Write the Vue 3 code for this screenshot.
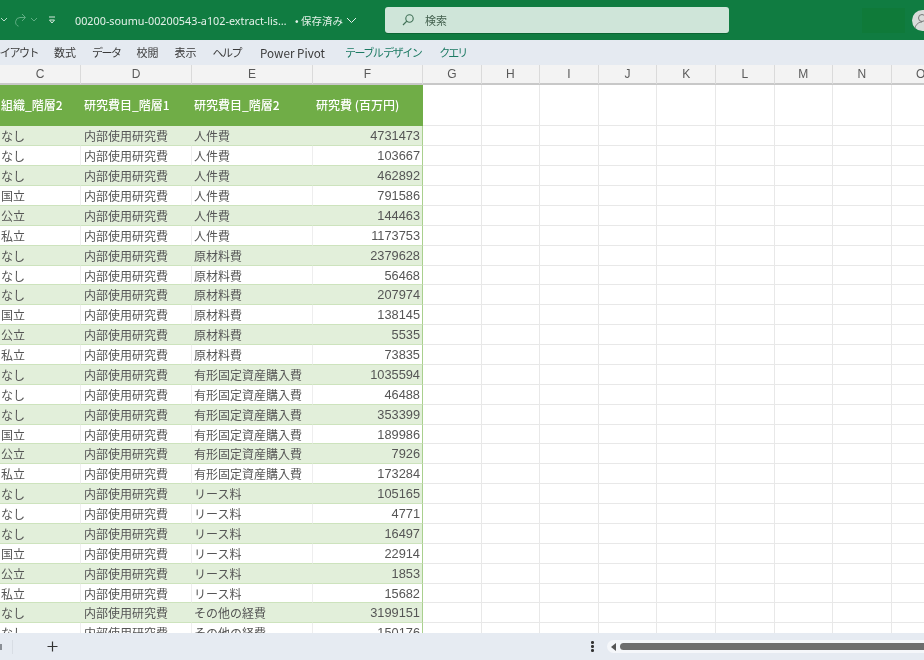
<template>
  <div class="app">
    <header class="titlebar">
      <svg class="ic-chev first" width="8" height="6" viewBox="0 0 8 6"><path d="M1 1l3 3 3-3" fill="none" stroke="#b9dcc8" stroke-width="1" /></svg>
      <svg class="ic-redo" width="13" height="14" viewBox="0 0 13 14">
        <path d="M8 1l3.500 3.500L8 8" fill="none" stroke="#5fae83" stroke-width="1" />
        <path d="M11 4.500H6a4.500 4.500 0 0 0-1.500 8.700" fill="none" stroke="#5fae83" stroke-width="1" />
      </svg>
      <svg class="ic-chev second" width="8" height="6" viewBox="0 0 8 6"><path d="M1 1l3 3 3-3" fill="none" stroke="#5fae83" stroke-width="1" /></svg>
      <svg class="ic-qat" width="8" height="8" viewBox="0 0 8 8"><path d="M1 1h6M1.500 4h5L4 7z" fill="none" stroke="#d7eadf" stroke-width="1" /></svg>
      <span class="filename">00200-soumu-00200543-a102-extract-lis…</span>
      <span class="saved">• 保存済み</span>
      <svg class="ic-chev third" width="11" height="7" viewBox="0 0 11 7"><path d="M1 1l4.500 4.500L10 1" fill="none" stroke="#e8f3ec" stroke-width="1" /></svg>
      <div class="search">
        <svg width="14" height="14" viewBox="0 0 14 14"><circle cx="8.500" cy="5.500" r="3.700" fill="none" stroke="#3f6f55" stroke-width="1.100" /><path d="M5.800 8.200L2 12" stroke="#3f6f55" stroke-width="1.200" /></svg>
        <span>検索</span>
      </div>
      <div class="account-box"></div>
      <div class="avatar">
        <svg width="20" height="20" viewBox="0 0 20 20"><circle cx="10" cy="8" r="3.500" fill="none" stroke="#777" stroke-width="1" /><path d="M3 18c1-4 4-6 7-6" fill="none" stroke="#777" stroke-width="1" /></svg>
      </div>
    </header>

    <nav class="ribbon">
      <span v-for="tab in tabs" :key="tab.label" :class="['tab', tab.kind]">{{ tab.label }}</span>
    </nav>

    <main class="sheet">
      <div class="grid-row col-head">
        <div v-for="col in columns" :key="col" class="col-cell">{{ col }}</div>
      </div>

      <div class="grid-row head-row">
        <div class="th">組織_階層2</div>
        <div class="th">研究費目_階層1</div>
        <div class="th">研究費目_階層2</div>
        <div class="th">研究費 (百万円)</div>
        <div v-for="col in emptyColumns" :key="col" class="blank"></div>
      </div>

      <div v-for="(row, index) in rows" :key="index" :class="['grid-row', 'data-row', { band: index % 2 === 0 }]">
        <div class="td">{{ row[0] }}</div>
        <div class="td">内部使用研究費</div>
        <div class="td">{{ row[1] }}</div>
        <div class="td num">{{ row[2] }}</div>
        <div v-for="col in emptyColumns" :key="col" class="blank"></div>
      </div>
    </main>

    <footer class="statusbar">
      <span class="sheet-prev"></span>
      <span class="sheet-cut"></span>
      <svg class="plus" width="11" height="11" viewBox="0 0 11 11"><path d="M5.500 0.500v10M0.500 5.500h10" stroke="#333" stroke-width="1.200" /></svg>
      <span class="dots"><i></i><i></i><i></i></span>
      <div class="scroll">
        <span class="arrow"></span>
        <span class="thumb"></span>
      </div>
    </footer>
  </div>
</template>

<script setup>
const tabs = [
  { label: "レイアウト", kind: "kana" },
  { label: "数式" },
  { label: "データ", kind: "kana" },
  { label: "校閲" },
  { label: "表示" },
  { label: "ヘルプ", kind: "kana" },
  { label: "Power Pivot", kind: "latin" },
  { label: "テーブル デザイン", kind: "kana design" },
  { label: "クエリ", kind: "kana query" },
];

const columns = ["C", "D", "E", "F", "G", "H", "I", "J", "K", "L", "M", "N", "O"];
const emptyColumns = columns.slice(4);

const rows = [
  ["なし", "人件費", 4731473],
  ["なし", "人件費", 103667],
  ["なし", "人件費", 462892],
  ["国立", "人件費", 791586],
  ["公立", "人件費", 144463],
  ["私立", "人件費", 1173753],
  ["なし", "原材料費", 2379628],
  ["なし", "原材料費", 56468],
  ["なし", "原材料費", 207974],
  ["国立", "原材料費", 138145],
  ["公立", "原材料費", 5535],
  ["私立", "原材料費", 73835],
  ["なし", "有形固定資産購入費", 1035594],
  ["なし", "有形固定資産購入費", 46488],
  ["なし", "有形固定資産購入費", 353399],
  ["国立", "有形固定資産購入費", 189986],
  ["公立", "有形固定資産購入費", 7926],
  ["私立", "有形固定資産購入費", 173284],
  ["なし", "リース料", 105165],
  ["なし", "リース料", 4771],
  ["なし", "リース料", 16497],
  ["国立", "リース料", 22914],
  ["公立", "リース料", 1853],
  ["私立", "リース料", 15682],
  ["なし", "その他の経費", 3199151],
  ["なし", "その他の経費", 150176],
];
</script>

<style>
html,
body {
  margin: 0;
  background: #fff;
  overflow: hidden;
}
</style>

<style scoped>
.app {
  width: 924px;
  height: 660px;
  display: flex;
  flex-direction: column;
  overflow: hidden;
  font-family: "Noto Sans CJK JP", "Noto Sans", sans-serif;
  filter: blur(0.5px);
}

.titlebar {
  height: 40px;
  flex: none;
  display: flex;
  align-items: center;
  background: #107c41;
  color: #e4f1e9;
  font-size: 10.500px;
  white-space: nowrap;
}
.titlebar > * {
  flex: none;
}
.ic-redo {
  margin-left: 6px;
}
.ic-chev.second {
  margin-left: 3px;
}
.ic-qat {
  margin-left: 10px;
}
.filename {
  margin-left: 19px;
  width: 214px;
  overflow: hidden;
  font-family: "Noto Sans", sans-serif;
  font-size: 10.800px;
}
.saved {
  margin-left: 6px;
}
.ic-chev.third {
  margin-left: 3px;
}
.search {
  margin-left: 28px;
  width: 344px;
  height: 26px;
  box-sizing: border-box;
  padding-left: 16px;
  display: flex;
  align-items: center;
  gap: 10px;
  border-radius: 3px;
  background: #cfe5d9;
  box-shadow: 0 1px 0 #0b6633;
  color: #44614f;
  font-size: 11px;
}
.account-box {
  margin-left: 133px;
  width: 43px;
  height: 25px;
  background: #0f7a39;
}
.avatar {
  margin-left: 7px;
  width: 21px;
  height: 21px;
  display: flex;
  align-items: center;
  justify-content: center;
  border-radius: 50%;
  background: #d9dcda;
}

.ribbon {
  height: 25px;
  flex: none;
  box-sizing: border-box;
  padding: 0 0 1px 9.500px;
  margin-left: -19px;
  display: flex;
  align-items: center;
  gap: 16px;
  background: #e5eaf1;
  color: #3a3a3a;
  font-size: 11px;
  white-space: nowrap;
}
.tab.kana {
  letter-spacing: -1.500px;
}
.tab.latin {
  margin-left: 3px;
  font-size: 11.700px;
}
.tab.design {
  margin-left: 4px;
  color: #1c7a63;
}
.tab.query {
  margin-left: 2px;
  letter-spacing: -2px;
  color: #1c7a63;
}

.sheet {
  flex: 1;
  min-height: 0;
  overflow: hidden;
  background: #fff;
}
.grid-row {
  display: grid;
  grid-template-columns: 81px 111px 121px 110px repeat(9, 58.600px);
}

.col-head {
  height: 20px;
  box-sizing: border-box;
  background: #f3f3f3;
  border-bottom: 2px solid #c8c8c8;
}
.col-cell {
  text-align: center;
  border-right: 1px solid #dadada;
  font-family: "Liberation Sans", sans-serif;
  font-size: 12px;
  line-height: 19px;
  color: #5a5a5a;
}

.head-row {
  height: 41.400px;
}
.th {
  display: flex;
  align-items: center;
  box-sizing: border-box;
  padding: 0 0 2px 3px;
  background: #70ad47;
  color: #fff;
  font-size: 12px;
  font-weight: 500;
  white-space: nowrap;
}
.th:first-child {
  padding-left: 1px;
}
.th:nth-child(3) {
  padding-left: 2px;
}

.data-row {
  height: 19.890px;
}
.td {
  box-sizing: border-box;
  padding-left: 3px;
  border-bottom: 1px solid #cde3bd;
  border-right: 1px solid #eeeeee;
  font-size: 12px;
  line-height: 19px;
  color: #555;
  white-space: nowrap;
  overflow: hidden;
}
.td:first-child {
  padding-left: 1px;
}
.td:nth-child(3) {
  padding-left: 2px;
}
.td.num {
  padding: 0 2px 0 0;
  text-align: right;
  border-right: 1px solid #a9d08e;
  font-family: "Liberation Sans", sans-serif;
  font-size: 12.800px;
}
.band .td {
  background: #e2efda;
  border-right-color: #e2efda;
}
.band .td.num {
  border-right-color: #a9d08e;
}

.blank {
  box-sizing: border-box;
  border-right: 1px solid #e8e8e8;
  border-bottom: 1px solid #e8e8e8;
}

.statusbar {
  height: 27px;
  flex: none;
  display: flex;
  align-items: center;
  background: #e6ebf2;
}
.sheet-prev {
  width: 2px;
  height: 6px;
  background: #8a8f96;
}
.sheet-cut {
  width: 1px;
  height: 14px;
  margin-left: 10px;
  background: #d8dde4;
}
.plus {
  margin-left: 34px;
}
.dots {
  margin-left: 533px;
  display: flex;
  flex-direction: column;
  gap: 1.500px;
}
.dots i {
  width: 2.500px;
  height: 2.500px;
  background: #333;
  border-radius: 50%;
}
.scroll {
  margin-left: 13px;
  flex: 1;
  height: 13px;
  display: flex;
  align-items: center;
  padding-left: 4px;
  gap: 2px;
  border-radius: 7px 0 0 7px;
  background: #f5f7fa;
}
.arrow {
  width: 0;
  height: 0;
  border-top: 4px solid transparent;
  border-bottom: 4px solid transparent;
  border-right: 5px solid #555;
}
.thumb {
  flex: 1;
  margin-left: 2px;
  height: 7px;
  border-radius: 4px 0 0 4px;
  background: #6e6e6e;
}
</style>
